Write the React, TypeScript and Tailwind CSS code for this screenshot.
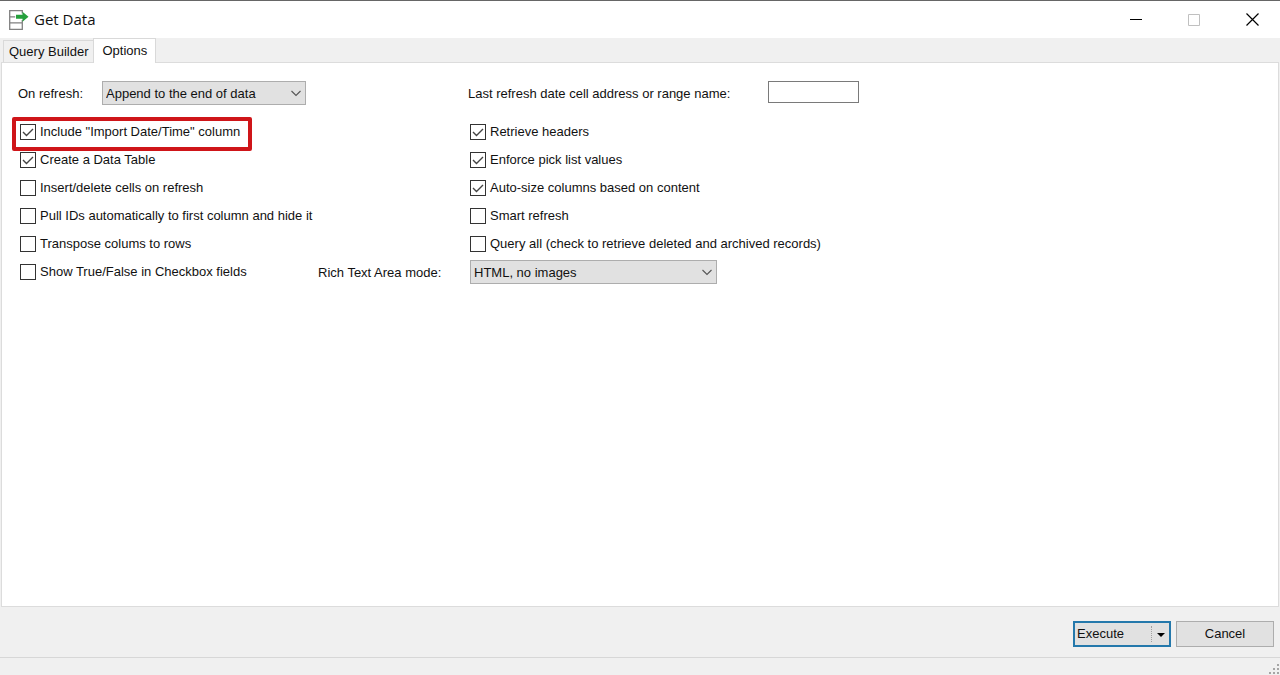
import { useId, useState } from 'react';
import type { ReactNode } from 'react';

type Option = { label: string; checked: boolean; highlighted?: boolean };

const LEFT_OPTIONS: Option[] = [
  { label: 'Include "Import Date/Time" column', checked: true, highlighted: true },
  { label: 'Create a Data Table', checked: true },
  { label: 'Insert/delete cells on refresh', checked: false },
  { label: 'Pull IDs automatically to first column and hide it', checked: false },
  { label: 'Transpose colums to rows', checked: false },
  { label: 'Show True/False in Checkbox fields', checked: false },
];

const RIGHT_OPTIONS: Option[] = [
  { label: 'Retrieve headers', checked: true },
  { label: 'Enforce pick list values', checked: true },
  { label: 'Auto-size columns based on content', checked: true },
  { label: 'Smart refresh', checked: false },
  { label: 'Query all (check to retrieve deleted and archived records)', checked: false },
];

function GetDataIcon() {
  return (
    <svg width="20" height="20" viewBox="0 0 20 20" fill="none" aria-hidden="true">
      <path
        d="M13.3 3.5V.7H.7v18.6h12.6v-6.5H.7M.7 6.8h5.5M13.3 12.8V10"
        stroke="#808080"
        strokeWidth="1.3"
      />
      <path d="M7 4.8h6.5V1.8L19.5 6.8l-6 5V8.8H7z" fill="#25a03c" />
    </svg>
  );
}

function CheckOption({ label, checked: initial, highlighted }: Option) {
  const [checked, setChecked] = useState(initial);
  const id = useId();

  return (
    <div className="relative flex h-7 w-fit items-center gap-1">
      <span className="relative size-4">
        <input
          id={id}
          type="checkbox"
          className="block size-4 appearance-none border border-[#333333] bg-white"
          checked={checked}
          onChange={(e) => setChecked(e.target.checked)}
        />
        {checked && (
          <svg
            className="pointer-events-none absolute inset-0"
            width="16"
            height="16"
            viewBox="0 0 16 16"
            fill="none"
            aria-hidden="true"
          >
            <path d="M3 8l3.5 3.5L13 5" stroke="#444444" strokeWidth="1.4" />
          </svg>
        )}
      </span>
      <label htmlFor={id} className="whitespace-nowrap">
        {label}
      </label>
      {highlighted && (
        <span className="pointer-events-none absolute -top-px -right-3 -bottom-[5px] -left-2 rounded-xs border-4 border-[#cf1519]" />
      )}
    </div>
  );
}

function SelectBox({ id, className, children }: { id: string; className: string; children: ReactNode }) {
  return (
    <div className={`relative h-6 ${className}`}>
      <select
        id={id}
        className="block h-6 w-full appearance-none border border-[#adadad] bg-[#e1e1e1] pt-px pr-6 pl-[3px]"
      >
        {children}
      </select>
      <svg
        className="pointer-events-none absolute top-2 right-1"
        width="12"
        height="8"
        viewBox="0 0 12 8"
        fill="none"
        aria-hidden="true"
      >
        <path d="M1.5 2L6 6.5 10.5 2" stroke="#555555" strokeWidth="1.1" />
      </svg>
    </div>
  );
}

function TitleBar() {
  return (
    <header className="flex h-[38px] items-center border-t border-[#666666] bg-white pl-[9px]">
      <GetDataIcon />
      <h1 className="ml-[5px] pb-0.5 font-['Open_Sans',sans-serif] text-[15px]">Get Data</h1>
      <div className="ml-auto flex self-stretch">
        <button type="button" aria-label="Minimize" className="flex w-14 items-center justify-center">
          <svg width="12" height="12" viewBox="0 0 12 12" aria-hidden="true">
            <path d="M0 5.5h12" stroke="#000000" />
          </svg>
        </button>
        <button type="button" aria-label="Maximize" disabled className="flex w-[60px] items-center justify-center">
          <svg width="12" height="12" viewBox="0 0 12 12" fill="none" aria-hidden="true">
            <path d="M.5.5h11v11H.5z" stroke="#c0c0c0" />
          </svg>
        </button>
        <button type="button" aria-label="Close" className="flex w-14 items-center justify-center">
          <svg width="13" height="13" viewBox="0 0 13 13" aria-hidden="true">
            <path d="M.5.5l12 12M12.5.5l-12 12" stroke="#000000" strokeWidth="1.2" />
          </svg>
        </button>
      </div>
    </header>
  );
}

export default function App() {
  return (
    <div className="flex min-h-screen flex-col bg-[#f0f0f0] font-['Liberation_Sans',Arial,sans-serif] text-[13px] leading-4 text-[#111111]">
      <TitleBar />

      <div role="tablist" className="flex h-6 items-end pl-[3px]">
        <button
          type="button"
          role="tab"
          aria-selected="false"
          className="h-[22px] border border-r-0 border-b-0 border-[#d9d9d9] px-[5px] pt-px"
        >
          Query Builder
        </button>
        <button
          type="button"
          role="tab"
          aria-selected="true"
          className="relative -mb-px h-[25px] border border-b-0 border-[#d9d9d9] bg-white px-2"
        >
          Options
        </button>
      </div>

      <main className="mx-px flex-1 border border-[#dcdcdc] bg-white pt-[18px] pl-4">
        <div className="flex">
          <div className="flex w-[450px] items-center">
            <label htmlFor="on-refresh" className="w-[84px] pt-px">
              On refresh:
            </label>
            <SelectBox id="on-refresh" className="w-[204px]">
              <option>Append to the end of data</option>
              <option>Replace existing data</option>
            </SelectBox>
          </div>
          <div className="flex items-center">
            <label htmlFor="refresh-cell" className="w-[300px] pt-px">
              Last refresh date cell address or range name:
            </label>
            <input
              id="refresh-cell"
              type="text"
              className="h-[22px] w-[91px] self-start border border-[#7a7a7a] bg-white px-1"
            />
          </div>
        </div>

        <div className="mt-[13px] flex pl-0.5">
          <div className="w-[450px]">
            {LEFT_OPTIONS.map((option) => (
              <CheckOption key={option.label} {...option} />
            ))}
          </div>
          <div>
            {RIGHT_OPTIONS.map((option) => (
              <CheckOption key={option.label} {...option} />
            ))}
            {/* The label hangs out into the free space of the left column */}
            <div className="-ml-[152px] flex h-7 items-center">
              <label htmlFor="rich-text-mode" className="w-[152px] pt-px">
                Rich Text Area mode:
              </label>
              <SelectBox id="rich-text-mode" className="w-[247px]">
                <option>HTML, no images</option>
                <option>HTML with images</option>
                <option>Plain text</option>
              </SelectBox>
            </div>
          </div>
        </div>
      </main>

      <footer>
        <div className="flex h-[51px] items-center justify-end gap-[5px] border-b border-[#d7d7d7] pt-1 pr-1.5">
          <div className="flex h-[26px] w-[98px] items-center border-2 border-[#2478ab] bg-[#e1e1e1]">
            <button type="button" className="flex-1 pl-0.5 text-left">
              Execute
            </button>
            <button
              type="button"
              aria-label="More execute options"
              className="flex h-4 w-[18px] items-center justify-center border-l border-dotted border-[#a0a0a0] pt-0.5"
            >
              <svg width="8" height="4" viewBox="0 0 8 4" aria-hidden="true">
                <path d="M0 0h8L4 4z" fill="#000000" />
              </svg>
            </button>
          </div>
          <button type="button" className="h-[26px] w-[98px] border border-[#adadad] bg-[#e1e1e1]">
            Cancel
          </button>
        </div>
        <div className="flex h-[17px] items-end justify-end">
          <svg width="11" height="11" viewBox="0 0 11 11" fill="#a5a5a5" aria-hidden="true">
            <path d="M8 0h2v2H8zM4 4h2v2H4zM8 4h2v2H8zM0 8h2v2H0zM4 8h2v2H4zM8 8h2v2H8z" />
          </svg>
        </div>
      </footer>
    </div>
  );
}
